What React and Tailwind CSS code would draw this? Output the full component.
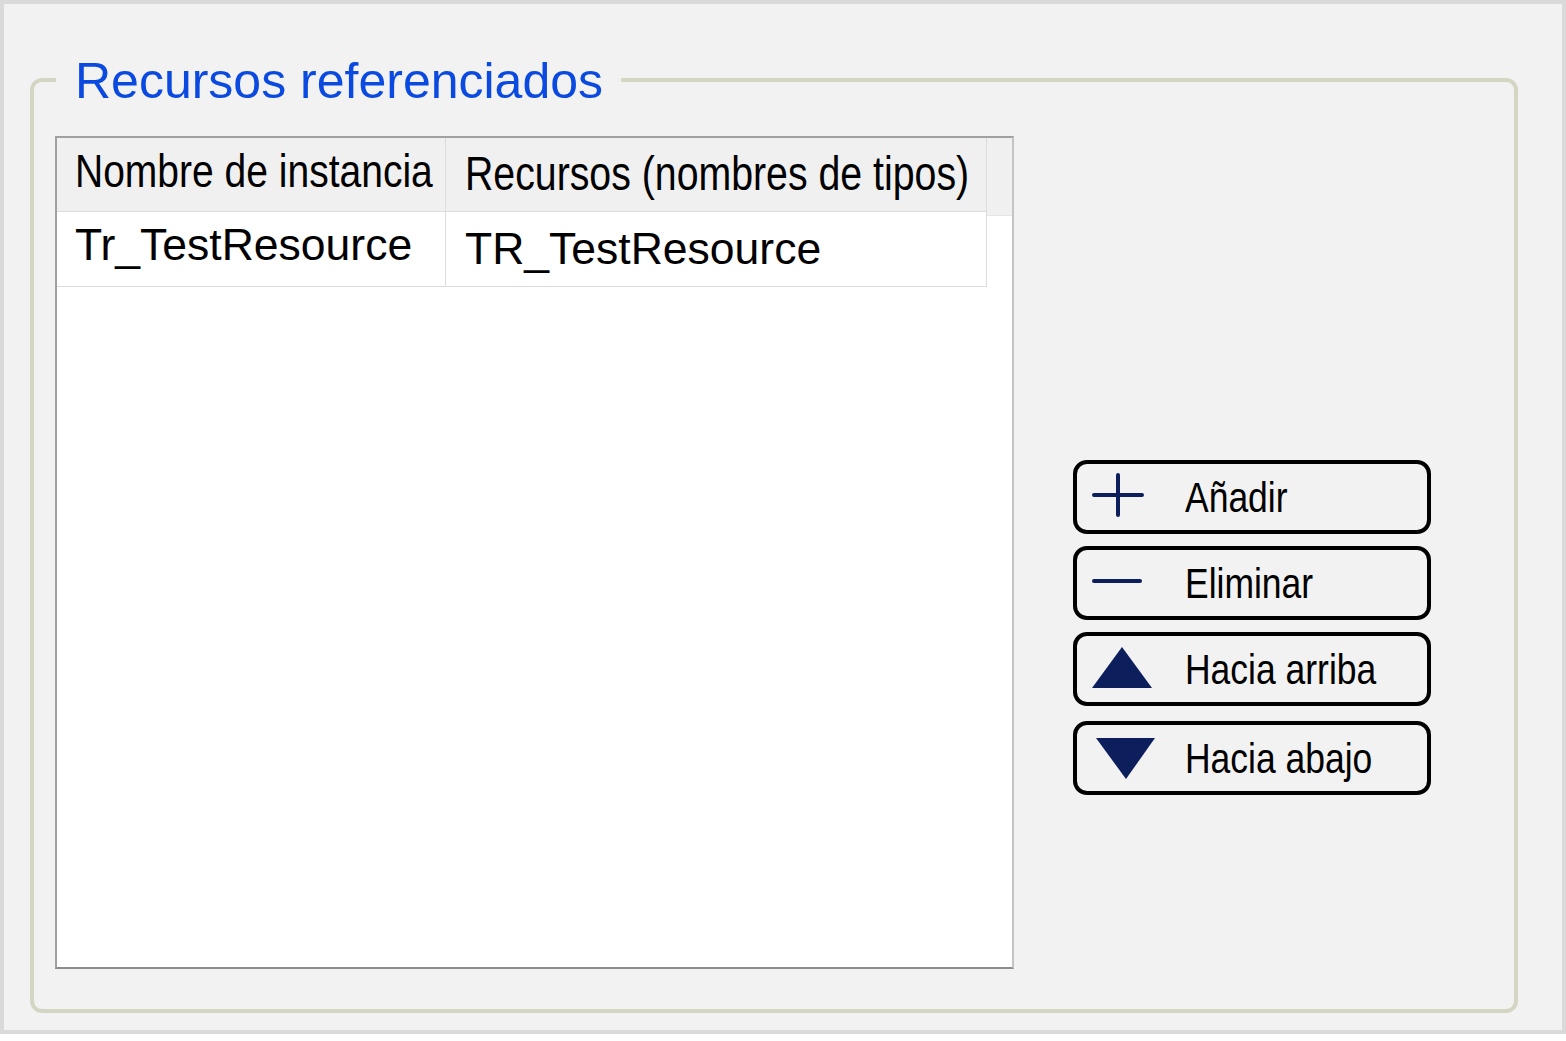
import React from "react";

const NAVY = "#0c1f5c";

// Button icons, drawn in the 108x66 inner-left area of each button
const PlusIcon = () => (
  <svg width="108" height="66" viewBox="0 0 108 66" className="shrink-0">
    <path d="M17 31H65M41 11V51" stroke={NAVY} strokeWidth="4" strokeLinecap="round" fill="none" />
  </svg>
);

const MinusIcon = () => (
  <svg width="108" height="66" viewBox="0 0 108 66" className="shrink-0">
    <path d="M17 31H63" stroke={NAVY} strokeWidth="4" strokeLinecap="round" fill="none" />
  </svg>
);

const UpIcon = () => (
  <svg width="108" height="66" viewBox="0 0 108 66" className="shrink-0">
    <polygon points="15,52 75,52 45,11" fill={NAVY} />
  </svg>
);

const DownIcon = () => (
  <svg width="108" height="66" viewBox="0 0 108 66" className="shrink-0">
    <polygon points="19,13 78,13 49,54" fill={NAVY} />
  </svg>
);

const BUTTONS = [
  { label: "Añadir", Icon: PlusIcon, mt: "mt-0" },
  { label: "Eliminar", Icon: MinusIcon, mt: "mt-[12px]" },
  { label: "Hacia arriba", Icon: UpIcon, mt: "mt-[12px]" },
  { label: "Hacia abajo", Icon: DownIcon, mt: "mt-[15px]" },
];

// no narrow face installed: squeeze Liberation Sans horizontally
const ActionButton = ({ label, Icon, mt }) => (
  <button
    type="button"
    className={`${mt} flex h-[74px] w-[358px] items-center overflow-hidden rounded-[14px] border-4 border-black bg-[#f2f2f2] p-0 text-left`}
  >
    <Icon />
    <span className="inline-block origin-left scale-x-[0.825] whitespace-nowrap text-[43px] leading-none text-black">
      {label}
    </span>
  </button>
);

const App = () => {
  return (
    <div className="h-[1041px] w-[1566px] bg-white font-['Liberation_Sans',Arial,sans-serif]">
      {/* outer panel */}
      <div className="h-[1034px] w-[1566px] border-4 border-[#dadada] bg-[#f2f2f2] pl-[26px] pt-[74px]">
        {/* group box */}
        <div className="relative flex h-[935px] w-[1488px] rounded-[12px] border-4 border-[#d5d5c3]">
          <div className="absolute left-[22px] top-[-26px] bg-[#f2f2f2] pl-[19px] pr-[18px] text-[50px] leading-none text-[#0b4ae0]">
            Recursos referenciados
          </div>

          {/* table */}
          <div className="ml-[21px] mt-[54px] flex h-[833px] w-[959px] flex-col border-2 border-b-[#8c8c8c] border-l-[#a0a0a0] border-r-[#c4c4c4] border-t-[#a0a0a0] bg-white">
            <div className="flex h-[74px] bg-[#f0f0f0]">
              <div className="h-full w-[389px] overflow-hidden whitespace-nowrap border-b border-r border-[#dcdcdc] pl-[18px] pt-[9px]">
                <span className="inline-block origin-left scale-x-[0.83] text-[47px] leading-none text-black">
                  Nombre de instancia
                </span>
              </div>
              <div className="h-full w-[541px] overflow-hidden whitespace-nowrap border-b border-r border-[#dcdcdc] pl-[19px] pt-[12px]">
                <span className="inline-block origin-left scale-x-[0.818] text-[48px] leading-none text-black">
                  Recursos (nombres de tipos)
                </span>
              </div>
              <div className="h-[78px] flex-1 border-b border-[#e4e4e4] bg-[#f0f0f0]" />
            </div>
            <div className="flex h-[75px]">
              <div className="h-full w-[389px] whitespace-nowrap border-b border-r border-[#dcdcdc] pl-[18px] pt-[11px] text-[44.5px] leading-none text-black">
                Tr_TestResource
              </div>
              <div className="h-full w-[541px] whitespace-nowrap border-b border-r border-[#dcdcdc] pl-[19px] pt-[15px] text-[44.5px] leading-none text-black">
                TR_TestResource
              </div>
            </div>
          </div>

          {/* side buttons */}
          <div className="ml-[59px] mt-[378px] flex flex-col">
            {BUTTONS.map((b) => (
              <ActionButton key={b.label} {...b} />
            ))}
          </div>
        </div>
      </div>
    </div>
  );
};

export default App;
